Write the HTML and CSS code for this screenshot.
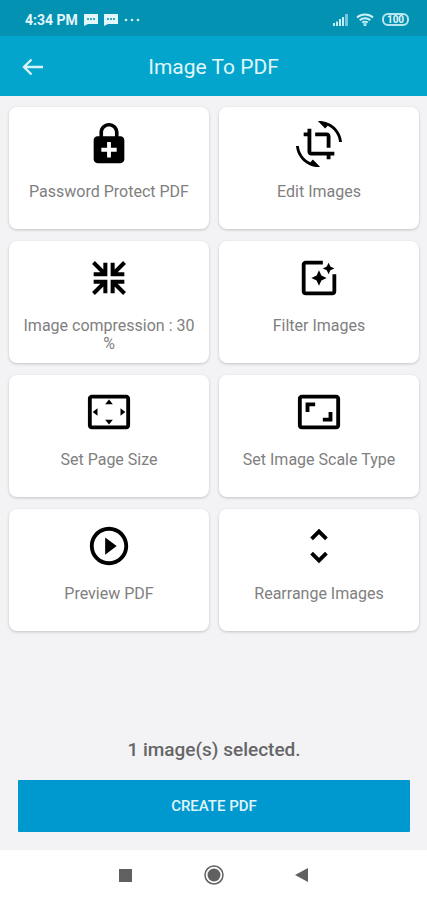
FILE: index.html
```
<!DOCTYPE html>
<html lang="en">
<head>
<meta charset="UTF-8">
<meta name="viewport" content="width=device-width, initial-scale=1.0">
<title>Image To PDF</title>
<link rel="stylesheet" href="styles.css">
</head>
<body>
<div class="status-bar">
  <div class="status-left">
    <span>4:34 PM</span>
    <svg width="14" height="12" viewBox="0 0 14 12"><path d="M0 0h14v10H4l-4 2z" fill="#e3f6fa"/><path d="M3 5h8" stroke="#0492b2" stroke-width="1.5" stroke-dasharray="2 1"/></svg>
    <svg width="14" height="12" viewBox="0 0 14 12"><path d="M0 0h14v10H4l-4 2z" fill="#e3f6fa"/><path d="M3 5h8" stroke="#0492b2" stroke-width="1.5" stroke-dasharray="2 1"/></svg>
    <svg width="16" height="12" viewBox="0 0 16 12" fill="#d3f0f6"><circle cx="2" cy="6" r="1.3"/><circle cx="8" cy="6" r="1.3"/><circle cx="14" cy="6" r="1.3"/></svg>
  </div>
  <div class="status-right">
    <svg width="15" height="12" viewBox="0 0 15 12" fill="#c3ecf3"><path d="M0 9h2v3H0zM3 7.500h2V12H3zM6 5h2v7H6zM9 3h2v9H9z"/><path d="M12 0h3v12h-3z" opacity=".6"/></svg>
    <svg width="18" height="13" viewBox="0 0 18 13" fill="none" stroke="#c9f0f5" stroke-width="2"><path d="M1 4.500c4.500-4 11.500-4 16 0M3.700 7.300c3-2.700 7.600-2.700 10.600 0M6.300 9.800c1.500-1.400 3.900-1.400 5.400 0"/><circle cx="9" cy="11.500" r=".6"/></svg>
    <span class="battery">100</span>
  </div>
</div>

<header class="app-bar">
  <button class="back" aria-label="Back">
    <svg width="22" height="18" viewBox="0 0 22 18" fill="none" stroke="#d8f4f9" stroke-width="2.400"><path d="M21 9H2M9.500 1.500L2 9l7.500 7.500"/></svg>
  </button>
  <h1>Image To PDF</h1>
</header>

<main>
  <div class="options">
    <button class="card">
      <svg class="icon" viewBox="0 0 24 24"><path d="M18 8h-1V6c0-2.760-2.240-5-5-5S7 3.240 7 6v2H6c-1.100 0-2 .9-2 2v10c0 1.100.9 2 2 2h12c1.100 0 2-.9 2-2V10c0-1.100-.9-2-2-2zM8.900 6c0-1.710 1.390-3.100 3.100-3.100s3.100 1.390 3.100 3.100v2H8.900V6zM16 16h-3v3h-2v-3H8v-2h3v-3h2v3h3v2z"/></svg>
      <span>Password Protect PDF</span>
    </button>
    <button class="card">
      <svg class="icon" viewBox="0 0 24 24"><path d="M7.470 21.490C4.200 19.930 1.860 16.760 1.500 13H0c.51 6.160 5.660 11 11.950 11 .23 0 .44-.02.66-.03L8.800 20.150l-1.330 1.340zM12.050 0c-.23 0-.44.02-.66.04l3.810 3.810 1.330-1.330C19.800 4.070 22.140 7.240 22.500 11H24c-.51-6.160-5.660-11-11.950-11zM16 14h2V8c0-1.110-.9-2-2-2h-6v2h6v6zm-8 2V4H6v2H4v2h2v8c0 1.100.89 2 2 2h8v2h2v-2h2v-2H8z"/></svg>
      <span>Edit Images</span>
    </button>
    <button class="card">
      <svg class="icon" viewBox="0 0 24 24" fill="none" stroke="#000" stroke-width="2.100"><path d="M3.900 3.900l6 6M10.100 4v6.100H4M20.100 3.900l-6 6M13.900 4v6.100H20M3.900 20.100l6-6M10.100 20v-6.100H4M20.100 20.100l-6-6M13.900 20v-6.100H20"/></svg>
      <span>Image compression : 30 %</span>
    </button>
    <button class="card">
      <svg class="icon" viewBox="0 0 24 24"><path d="M19.020 10v9H5V5h9V3H5.020c-1.100 0-2 .9-2 2v14c0 1.100.9 2 2 2H19c1.100 0 2-.9 2-2v-9h-1.980zM17 10l.94-2.060L20 7l-2.060-.94L17 4l-.94 2.060L14 7l2.060.94zM13.250 10.750L12 8l-1.250 2.750L8 12l2.750 1.250L12 16l1.250-2.750L16 12z"/></svg>
      <span>Filter Images</span>
    </button>
    <button class="card">
      <svg class="icon" viewBox="0 0 24 24"><path d="M12.010 5.500L10 8h4l-1.990-2.500zM18 10v4l2.500-1.990L18 10zM6 10l-2.500 2.010L6 14v-4zm8 6h-4l2.010 2.500L14 16zm7-13H3c-1.100 0-2 .9-2 2v14c0 1.100.9 2 2 2h18c1.100 0 2-.9 2-2V5c0-1.100-.9-2-2-2zm0 16.010H3V4.990h18v14.020z"/></svg>
      <span>Set Page Size</span>
    </button>
    <button class="card">
      <svg class="icon" viewBox="0 0 24 24"><path d="M19 12h-2v3h-3v2h5v-5zM7 9h3V7H5v5h2V9zm14-6H3c-1.100 0-2 .9-2 2v14c0 1.100.9 2 2 2h18c1.100 0 2-.9 2-2V5c0-1.100-.9-2-2-2zm0 16.010H3V4.990h18v14.020z"/></svg>
      <span>Set Image Scale Type</span>
    </button>
    <button class="card">
      <svg class="icon" viewBox="0 0 24 24"><path d="M10 16.500l6-4.500-6-4.500v9zM12 2C6.480 2 2 6.480 2 12s4.480 10 10 10 10-4.480 10-10S17.520 2 12 2zm0 18c-4.410 0-8-3.590-8-8s3.590-8 8-8 8 3.590 8 8-3.590 8-8 8z"/></svg>
      <span>Preview PDF</span>
    </button>
    <button class="card">
      <svg class="icon" viewBox="0 0 24 24"><path d="M12 5.830L15.170 9l1.410-1.410L12 3 7.410 7.590 8.830 9 12 5.830zm0 12.340L8.830 15l-1.410 1.410L12 21l4.590-4.590L15.170 15 12 18.170z"/></svg>
      <span>Rearrange Images</span>
    </button>
  </div>

  <div class="bottom">
    <p class="selected">1 image(s) selected.</p>
    <button class="create">CREATE PDF</button>
  </div>
</main>

<nav class="nav-bar">
  <button aria-label="Recent apps"><svg width="20" height="20" viewBox="0 0 20 20"><path d="M3 4h13v13H3z" fill="#606060"/></svg></button>
  <button aria-label="Home"><svg width="20" height="20" viewBox="0 0 20 20"><circle cx="10" cy="10" r="9" fill="none" stroke="#606060" stroke-width="1.500"/><circle cx="10" cy="10" r="6.500" fill="#606060"/></svg></button>
  <button aria-label="Back"><svg width="20" height="20" viewBox="0 0 20 20"><path d="M3 10l13-7v14z" fill="#606060"/></svg></button>
</nav>
</body>
</html>
```
FILE: styles.css
```
* {
  box-sizing: border-box;
}

body {
  margin: 0;
  min-height: 100vh;
  display: flex;
  flex-direction: column;
  font-family: Roboto, "Liberation Sans", sans-serif;
  background-color: #f3f3f6;
}

button {
  margin: 0;
  padding: 0;
  border: none;
  background: none;
  font-family: inherit;
  cursor: pointer;
}

svg {
  display: block;
}

.status-bar {
  height: 36px;
  padding: 3px 18px 0 25px;
  display: flex;
  justify-content: space-between;
  align-items: center;
  background-color: #0492b2;
  color: #e3f6fa;
  font-size: 14px;
  font-weight: 700;
}

.status-left,
.status-right {
  display: flex;
  align-items: center;
  gap: 6px;
}

.status-right {
  gap: 8px;
}

.battery {
  width: 27px;
  height: 13px;
  border: 2px solid #b5e6ef;
  border-radius: 6px;
  font-size: 10px;
  line-height: 9px;
  text-align: center;
}

.app-bar {
  height: 60px;
  padding: 1px 22px 0;
  display: grid;
  grid-template-columns: 24px 1fr 24px;
  align-items: center;
  background-color: #03a5cc;
}

.app-bar h1 {
  margin: 0;
  color: #e0f7fb;
  font-size: 21px;
  font-weight: 400;
  text-align: center;
}

main {
  flex: 1;
  padding: 11px 8px 18px 9px;
  display: flex;
  flex-direction: column;
  justify-content: space-between;
}

.options {
  display: grid;
  grid-template-columns: 1fr 1fr;
  gap: 12px 10px;
}

.card {
  min-height: 122px;
  padding: 14px 10px 8px;
  display: flex;
  flex-direction: column;
  align-items: center;
  gap: 16px;
  background-color: #fff;
  border-radius: 8px;
  box-shadow: 0 1px 3px rgba(0, 0, 0, 0.2);
  color: #808080;
  font-size: 16px;
  line-height: 18px;
}

.icon {
  width: 46px;
  height: 46px;
}

.bottom {
  padding: 0 9px;
}

.selected {
  margin: 0 0 18px;
  color: #666;
  font-size: 19px;
  font-weight: 500;
  line-height: 24px;
  text-align: center;
}

.create {
  width: 100%;
  height: 52px;
  background-color: #0099cf;
  border-radius: 1px;
  color: #e0f5fb;
  font-size: 15px;
  font-weight: 500;
}

.nav-bar {
  height: 50px;
  display: flex;
  justify-content: center;
  align-items: center;
  gap: 68px;
  background-color: #fff;
}
```
